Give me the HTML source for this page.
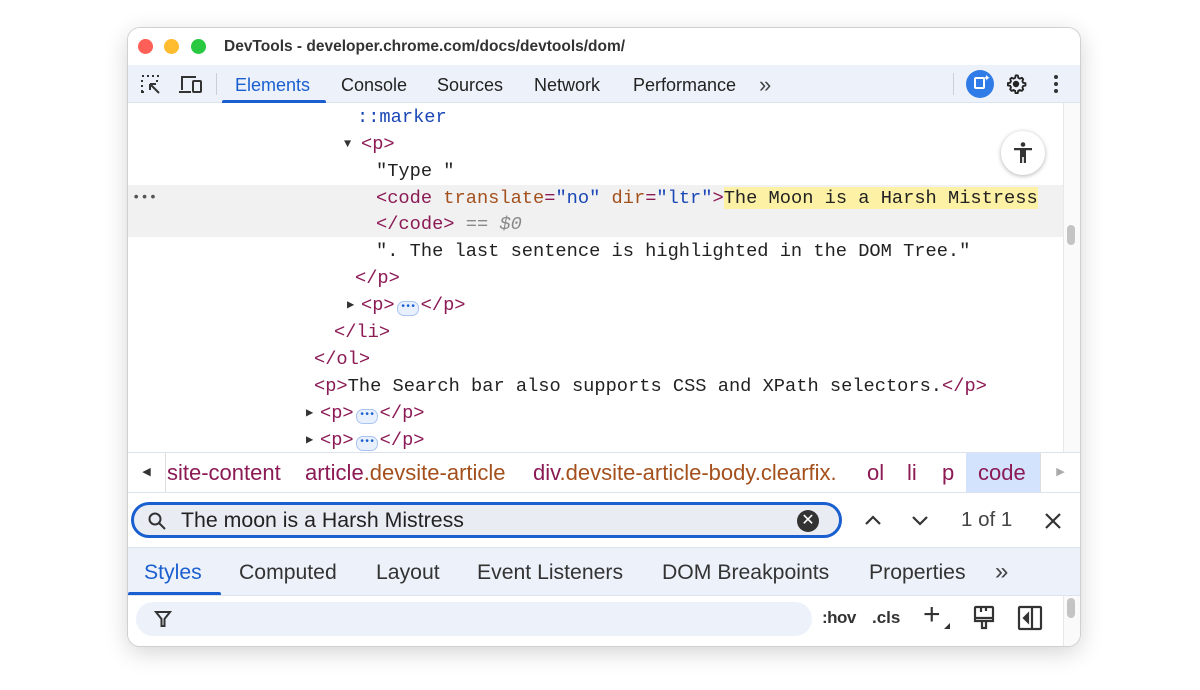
<!DOCTYPE html>
<html><head><style>
*{box-sizing:border-box;margin:0;padding:0}
body{width:1200px;height:690px;background:#fff;position:relative;overflow:hidden;font-family:"Liberation Sans",sans-serif}
.win{position:absolute;left:128px;top:28px;width:952px;height:618px;border-radius:12px;background:#fff;box-shadow:0 0 0 1px #d0d0d0,0 6px 24px rgba(0,0,0,.18);overflow:hidden}
.title{position:absolute;left:0;top:0;width:100%;height:37px;background:#fff}
.dot{position:absolute;top:11px;width:15px;height:15px;border-radius:50%}
.tt{position:absolute;left:96px;top:10px;font-size:15.5px;font-weight:bold;color:#333}
.tb{position:absolute;left:0;top:37px;width:100%;height:38px;background:#edf2fa;border-bottom:1px solid #dde3ec}
.tab{position:absolute;top:10px;font-size:18px;color:#222}
.dom{position:absolute;left:0;top:75px;width:936px;height:349px;background:#fff;font-family:"Liberation Mono",monospace;font-size:18.7px}
.ln{position:absolute;white-space:pre;height:27px;line-height:27px}
.t{color:#8b1a55}.a{color:#a4501d}.v{color:#1a47b5}.k{color:#222}
.tri{display:inline-block;font-size:12px;color:#333;vertical-align:2px;width:14px}
.ell{display:inline-block;width:22px;height:15px;border:1px solid #a8c4f0;border-radius:7px;background:#e8f0fe;color:#1a5fd0;font-size:10px;line-height:11px;text-align:center;vertical-align:1px;letter-spacing:-1px;margin:0 2px}
.bc{position:absolute;left:0;top:424px;width:100%;height:41px;border-top:1px solid #dde3ec;border-bottom:1px solid #dde3ec;font-size:22px;background:#fff}
.bc > span{position:absolute;top:7px;white-space:nowrap}
.sr{position:absolute;left:0;top:465px;width:100%;height:55px;background:#fff;border-bottom:1px solid #dde3ec}
.tabs2{position:absolute;left:0;top:520px;width:100%;height:48px;background:#edf2fa;border-bottom:1px solid #dde3ec}
.tabs2 span{position:absolute;top:13px;font-size:21.2px;color:#333}
.fr{position:absolute;left:0;top:568px;width:100%;height:50px;background:#fff}
</style></head><body>
<div class="win">
 <div class="title">
  <div class="dot" style="left:10px;background:#fe5f57"></div>
  <div class="dot" style="left:36px;background:#febc2e"></div>
  <div class="dot" style="left:63px;background:#28c840"></div>
  <div class="tt">DevTools - developer.chrome.com/docs/devtools/dom/</div>
 </div>
 <div class="tb">
  <svg style="position:absolute;left:12px;top:9px" width="22" height="22" viewBox="0 0 22 22" fill="none" stroke="#333" stroke-width="2"><path d="M2 2h2M7 2h2M12 2h2M17 2h1v1M2 6v2M2 11v2M2 16v2h2M17 6v2" /><path d="M10 10l9 9M10 10v6M10 10h6" /></svg>
  <svg style="position:absolute;left:50px;top:9px" width="26" height="22" viewBox="0 0 26 22" fill="none" stroke="#333" stroke-width="2"><path d="M4 16V3h14M1 18h12"/><rect x="15" y="7" width="8" height="11" rx="1"/></svg>
  <div style="position:absolute;left:88px;top:8px;width:1px;height:22px;background:#c8d0dc"></div>
  <div class="tab" style="left:107px;color:#1a5fd0">Elements</div>
  <div style="position:absolute;left:94px;top:35px;width:104px;height:3px;background:#1a5fd0;border-radius:2px 2px 0 0"></div>
  <div class="tab" style="left:213px">Console</div>
  <div class="tab" style="left:309px">Sources</div>
  <div class="tab" style="left:406px">Network</div>
  <div class="tab" style="left:505px">Performance</div>
  <div class="tab" style="left:631px;top:7px;font-size:22px;color:#444">&#187;</div>
  <div style="position:absolute;left:825px;top:8px;width:1px;height:22px;background:#c8d0dc"></div>
  <div style="position:absolute;left:838px;top:5px;width:28px;height:28px;border-radius:50%;background:#2f7be8"><div style="position:absolute;left:8px;top:7px;width:11px;height:12px;border:2px solid #fff;border-radius:2px"></div><div style="position:absolute;left:17px;top:3px;color:#fff;font-size:9px">✦</div></div>
  <svg style="position:absolute;left:877px;top:8px" width="22" height="22" viewBox="0 0 24 24"><path fill="none" stroke="#222" stroke-width="2" d="M12 2.5l2 .3.5 2.4 1.6.9 2.3-.8 1.4 1.5-.8 2.3.9 1.6 2.4.5v2.4l-2.4.5-.9 1.6.8 2.3-1.5 1.4-2.3-.8-1.6.9-.5 2.4h-2.4l-.5-2.4-1.6-.9-2.3.8-1.4-1.5.8-2.3-.9-1.6-2.4-.5v-2.4l2.4-.5.9-1.6-.8-2.3 1.5-1.4 2.3.8 1.6-.9.5-2.4z"/><circle cx="12" cy="12" r="3.5" fill="#222"/></svg>
  <div style="position:absolute;left:926px;top:10px;width:4px;height:4px;border-radius:50%;background:#333;box-shadow:0 7px 0 #333,0 14px 0 #333"></div>
 </div>
 <div class="dom">
  <div style="position:absolute;left:0;top:82px;width:936px;height:52px;background:#f1f1f1"></div>
  <div style="position:absolute;left:935px;top:0;width:17px;height:349px;background:#fafafa;border-left:1px solid #e8e8e8"></div>
  <div style="position:absolute;left:939px;top:122px;width:8px;height:20px;border-radius:4px;background:#c4c4c4"></div>
  <div class="ln" style="left:229px;top:1px"><span class="v">::marker</span></div>
  <div class="ln" style="left:216px;top:28px"><span class="tri" style="width:17px">▼</span><span class="t">&lt;p&gt;</span></div>
  <div class="ln k" style="left:248px;top:55px">"Type "</div>
  <div class="ln" style="left:4px;top:82px;color:#555;font-size:14px">•••</div>
  <div class="ln" style="left:248px;top:82px"><span class="t">&lt;code</span> <span class="a">translate</span><span class="t">=</span><span class="v">"no"</span> <span class="a">dir</span><span class="t">=</span><span class="v">"ltr"</span><span class="t">&gt;</span><span class="k" style="background:#fdf1a6">The Moon is a Harsh Mistress</span></div>
  <div class="ln" style="left:248px;top:108px"><span class="t">&lt;/code&gt;</span> <span style="color:#888">== <i>$0</i></span></div>
  <div class="ln k" style="left:248px;top:135px">". The last sentence is highlighted in the DOM Tree."</div>
  <div class="ln" style="left:227px;top:162px"><span class="t">&lt;/p&gt;</span></div>
  <div class="ln" style="left:219px;top:189px"><span class="tri">▶</span><span class="t">&lt;p&gt;</span><span class="ell">•••</span><span class="t">&lt;/p&gt;</span></div>
  <div class="ln" style="left:206px;top:216px"><span class="t">&lt;/li&gt;</span></div>
  <div class="ln" style="left:186px;top:243px"><span class="t">&lt;/ol&gt;</span></div>
  <div class="ln" style="left:186px;top:270px"><span class="t">&lt;p&gt;</span><span class="k">The Search bar also supports CSS and XPath selectors.</span><span class="t">&lt;/p&gt;</span></div>
  <div class="ln" style="left:178px;top:297px"><span class="tri">▶</span><span class="t">&lt;p&gt;</span><span class="ell">•••</span><span class="t">&lt;/p&gt;</span></div>
  <div class="ln" style="left:178px;top:324px"><span class="tri">▶</span><span class="t">&lt;p&gt;</span><span class="ell">•••</span><span class="t">&lt;/p&gt;</span></div>
  <div style="position:absolute;left:873px;top:28px;width:44px;height:44px;border-radius:50%;background:#fff;box-shadow:0 1px 5px rgba(0,0,0,.3)">
   <svg style="position:absolute;left:10px;top:10px" width="24" height="24" viewBox="0 0 24 24" fill="#333"><circle cx="12" cy="3.5" r="2.3"/><path d="M3 7h18v2.2h-6v12.8h-2.2v-6h-1.6v6H9V9.2H3z"/></svg>
  </div>
 </div>
 <div class="bc">
  <div style="position:absolute;left:0;top:0;width:38px;height:39px;border-right:1px solid #ddd;font-size:11px;color:#333;text-align:center;line-height:39px">◀</div>
  <span class="t" style="left:39px">site-content</span>
  <span style="left:177px"><span class="t">article</span><span class="a">.devsite-article</span></span>
  <span style="left:405px"><span class="t">div</span><span class="a">.devsite-article-body.clearfix.</span></span>
  <div style="position:absolute;left:838px;top:0;width:74px;height:39px;background:#d3e3fd"></div>
  <span class="t" style="left:739px">ol</span>
  <span class="t" style="left:779px">li</span>
  <span class="t" style="left:814px">p</span>
  <span class="t" style="left:850px">code</span>
  <div style="position:absolute;left:912px;top:0;width:40px;height:39px;border-left:1px solid #ddd;font-size:11px;color:#aaa;text-align:center;line-height:39px;background:#fff">▶</div>
 </div>
 <div class="sr">
  <div style="position:absolute;left:3px;top:9px;width:711px;height:36px;border:3px solid #1a5fd0;border-radius:18px;background:#e9edf3"></div>
  <svg style="position:absolute;left:19px;top:18px" width="20" height="20" viewBox="0 0 20 20" fill="none" stroke="#333" stroke-width="2"><circle cx="8" cy="8" r="5.5"/><path d="M12 12l6 6"/></svg>
  <div style="position:absolute;left:53px;top:15px;font-size:21.3px;color:#222">The moon is a Harsh Mistress</div>
  <div style="position:absolute;left:669px;top:17px;width:22px;height:22px;border-radius:50%;background:#333;color:#fff;text-align:center;font-size:16px;line-height:22px">✕</div>
  <svg style="position:absolute;left:735px;top:20px" width="20" height="14" viewBox="0 0 20 14" fill="none" stroke="#333" stroke-width="2.2"><path d="M3 11l7-7 7 7"/></svg>
  <svg style="position:absolute;left:782px;top:21px" width="20" height="14" viewBox="0 0 20 14" fill="none" stroke="#333" stroke-width="2.2"><path d="M3 3l7 7 7-7"/></svg>
  <div style="position:absolute;left:833px;top:15px;font-size:20.5px;color:#444">1 of 1</div>
  <svg style="position:absolute;left:915px;top:18px" width="20" height="20" viewBox="0 0 20 20" stroke="#333" stroke-width="2.2"><path d="M3 3l14 14M17 3L3 17"/></svg>
 </div>
 <div class="tabs2">
  <span style="left:16px;color:#1a5fd0">Styles</span>
  <div style="position:absolute;left:0;top:44px;width:93px;height:3px;background:#1a5fd0;border-radius:2px 2px 0 0"></div>
  <span style="left:111px">Computed</span>
  <span style="left:248px">Layout</span>
  <span style="left:349px">Event Listeners</span>
  <span style="left:534px">DOM Breakpoints</span>
  <span style="left:741px">Properties</span>
  <span style="left:867px;top:10px;font-size:24px;color:#444">&#187;</span>
 </div>
 <div class="fr">
  <div style="position:absolute;left:8px;top:6px;width:676px;height:34px;border-radius:17px;background:#edf2fa"></div>
  <svg style="position:absolute;left:26px;top:14px" width="18" height="18" viewBox="0 0 18 18" fill="none" stroke="#333" stroke-width="2"><path d="M2 2h14l-5.5 7v7h-3V9z"/></svg>
  <div style="position:absolute;left:694px;top:12px;font-size:17px;color:#333;font-weight:bold;letter-spacing:-.5px">:hov</div>
  <div style="position:absolute;left:744px;top:12px;font-size:17px;color:#333;font-weight:bold">.cls</div>
  <div style="position:absolute;left:795px;top:4px;font-size:30px;color:#333;line-height:30px">+</div>
  <div style="position:absolute;left:816px;top:27px;width:0;height:0;border-left:6px solid transparent;border-bottom:6px solid #333"></div>
  <svg style="position:absolute;left:844px;top:9px" width="24" height="26" viewBox="0 0 24 26" fill="none" stroke="#333" stroke-width="2.2"><rect x="3" y="2" width="18" height="11" rx="1"/><path d="M3 13v3h18v-3M10 16v7h4v-7M9 2v5M14 2v4"/></svg>
  <svg style="position:absolute;left:889px;top:9px" width="26" height="26" viewBox="0 0 26 26" fill="none" stroke="#333" stroke-width="2.2"><rect x="2" y="2" width="22" height="22" rx="1"/><path d="M15 2v22"/><path d="M11 9l-4 4 4 4z" fill="#333"/></svg>
  <div style="position:absolute;left:935px;top:0;width:17px;height:50px;background:#fafafa;border-left:1px solid #e8e8e8"></div>
  <div style="position:absolute;left:939px;top:2px;width:8px;height:20px;border-radius:4px;background:#c4c4c4"></div>
 </div>
</div>
</body></html>
